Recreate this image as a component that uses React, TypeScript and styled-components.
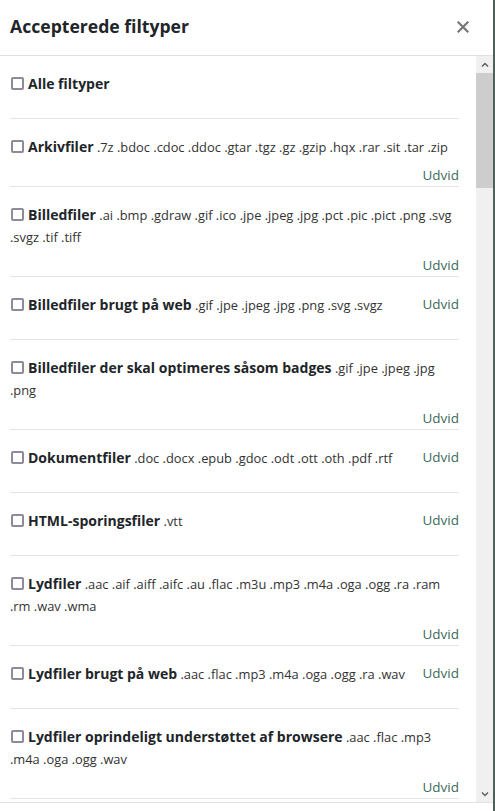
import React from 'react';
import styled, { createGlobalStyle } from 'styled-components';

const GlobalStyle = createGlobalStyle`
  html, body {
    margin: 0;
    padding: 0;
    height: 100%;
    background: #4f5f5a;
    font-family: "Open Sans", "Liberation Sans", sans-serif;
    color: #212529;
  }
  #root {
    height: 100%;
  }
`;

const Dialog = styled.div`
  width: 493px;
  height: 811px;
  background: #fff;
  display: flex;
  flex-direction: column;
`;

const Header = styled.div`
  height: 56px;
  flex-shrink: 0;
  display: flex;
  align-items: center;
  justify-content: space-between;
  padding: 0 23px 0 10px;
  border-bottom: 1px solid #dee2e6;
  box-sizing: border-box;
`;

const Title = styled.h2`
  margin: 0 0 4px;
  font-size: 17.6px;
  font-weight: 700;
  color: #212529;
`;

const CloseButton = styled.button`
  border: none;
  background: transparent;
  padding: 0;
  width: 14px;
  height: 14px;
  display: flex;
  align-items: center;
  justify-content: center;
  cursor: pointer;
  color: #777;
  margin-bottom: 2px;
`;

const ScrollArea = styled.div`
  flex: 1;
  min-height: 0;
  display: flex;
`;

const List = styled.div`
  flex: 1;
  min-width: 0;
  overflow: hidden;
  padding: 0 17px 0 10px;
`;

const ScrollBar = styled.div`
  width: 17px;
  flex-shrink: 0;
  display: flex;
  flex-direction: column;
  background: #f0f0f0;
`;

const ArrowButton = styled.div`
  height: 17px;
  flex-shrink: 0;
  display: flex;
  align-items: center;
  justify-content: center;
  color: #606060;
`;

const Track = styled.div`
  flex: 1;
`;

const Thumb = styled.div`
  height: 115px;
  background: #cdcdcd;
`;

const Row = styled.div`
  min-height: 63px;
  box-sizing: border-box;
  padding-top: 17px;
  display: flex;
  flex-wrap: wrap;
  align-items: flex-start;
  row-gap: 6px;
  border-bottom: 1px solid #e4e4e4;
`;

const Label = styled.label`
  flex: 0 1 auto;
  max-width: 100%;
  font-size: 12.85px;
  line-height: 22.5px;
  color: #333;
`;

const Check = styled.input.attrs({ type: 'checkbox' })`
  appearance: none;
  width: 13px;
  height: 13px;
  margin: 0 4px 0 1px;
  border: 2px solid #8e8a99;
  border-radius: 2px;
  box-sizing: border-box;
  vertical-align: -1px;
  background: #fff;
`;

const Name = styled.span`
  font-size: 14px;
  font-weight: 700;
  color: #212529;
`;

const Expand = styled.a`
  margin-left: auto;
  padding-left: 12px;
  font-size: 13.5px;
  line-height: 21px;
  color: #3b6a5c;
  text-decoration: none;
  cursor: pointer;
`;

const Footer = styled.div`
  height: 8px;
  flex-shrink: 0;
  border-top: 1px solid #dee2e6;
`;

type FileGroup = {
  name: string;
  exts?: string;
  expandable?: boolean;
};

const groups: FileGroup[] = [
  { name: 'Alle filtyper' },
  { name: 'Arkivfiler', exts: '.7z .bdoc .cdoc .ddoc .gtar .tgz .gz .gzip .hqx .rar .sit .tar .zip', expandable: true },
  { name: 'Billedfiler', exts: '.ai .bmp .gdraw .gif .ico .jpe .jpeg .jpg .pct .pic .pict .png .svg .svgz .tif .tiff', expandable: true },
  { name: 'Billedfiler brugt på web', exts: '.gif .jpe .jpeg .jpg .png .svg .svgz', expandable: true },
  { name: 'Billedfiler der skal optimeres såsom badges', exts: '.gif .jpe .jpeg .jpg .png', expandable: true },
  { name: 'Dokumentfiler', exts: '.doc .docx .epub .gdoc .odt .ott .oth .pdf .rtf', expandable: true },
  { name: 'HTML-sporingsfiler', exts: '.vtt', expandable: true },
  { name: 'Lydfiler', exts: '.aac .aif .aiff .aifc .au .flac .m3u .mp3 .m4a .oga .ogg .ra .ram .rm .wav .wma', expandable: true },
  { name: 'Lydfiler brugt på web', exts: '.aac .flac .mp3 .m4a .oga .ogg .ra .wav', expandable: true },
  { name: 'Lydfiler oprindeligt understøttet af browsere', exts: '.aac .flac .mp3 .m4a .oga .ogg .wav', expandable: true },
  { name: 'Præsentationsfiler', exts: '.gslides .odp .otp .pps .ppsx .ppt .pptx', expandable: true },
];

const CloseIcon = () => (
  <svg width="12" height="12" viewBox="0 0 12 12">
    <path d="M1.5 1.5 L10.5 10.5 M10.5 1.5 L1.5 10.5" stroke="currentColor" strokeWidth="2.2" strokeLinecap="square" />
  </svg>
);

const Chevron = ({ up }: { up?: boolean }) => (
  <svg width="8" height="6" viewBox="0 0 8 6">
    <path
      d={up ? 'M1 4.5 L4 1.5 L7 4.5' : 'M1 1.5 L4 4.5 L7 1.5'}
      fill="none"
      stroke="currentColor"
      strokeWidth="1.5"
    />
  </svg>
);

export default function App() {
  return (
    <>
      <GlobalStyle />
      <Dialog>
        <Header>
          <Title>Accepterede filtyper</Title>
          <CloseButton aria-label="Luk">
            <CloseIcon />
          </CloseButton>
        </Header>
        <ScrollArea>
          <List>
            {groups.map((g) => (
              <Row key={g.name}>
                <Label>
                  <Check />
                  <Name>{g.name}</Name>
                  {g.exts && <> {g.exts}</>}
                </Label>
                {g.expandable && <Expand>Udvid</Expand>}
              </Row>
            ))}
          </List>
          <ScrollBar>
            <ArrowButton>
              <Chevron up />
            </ArrowButton>
            <Track>
              <Thumb />
            </Track>
            <ArrowButton>
              <Chevron />
            </ArrowButton>
          </ScrollBar>
        </ScrollArea>
        <Footer />
      </Dialog>
    </>
  );
}
